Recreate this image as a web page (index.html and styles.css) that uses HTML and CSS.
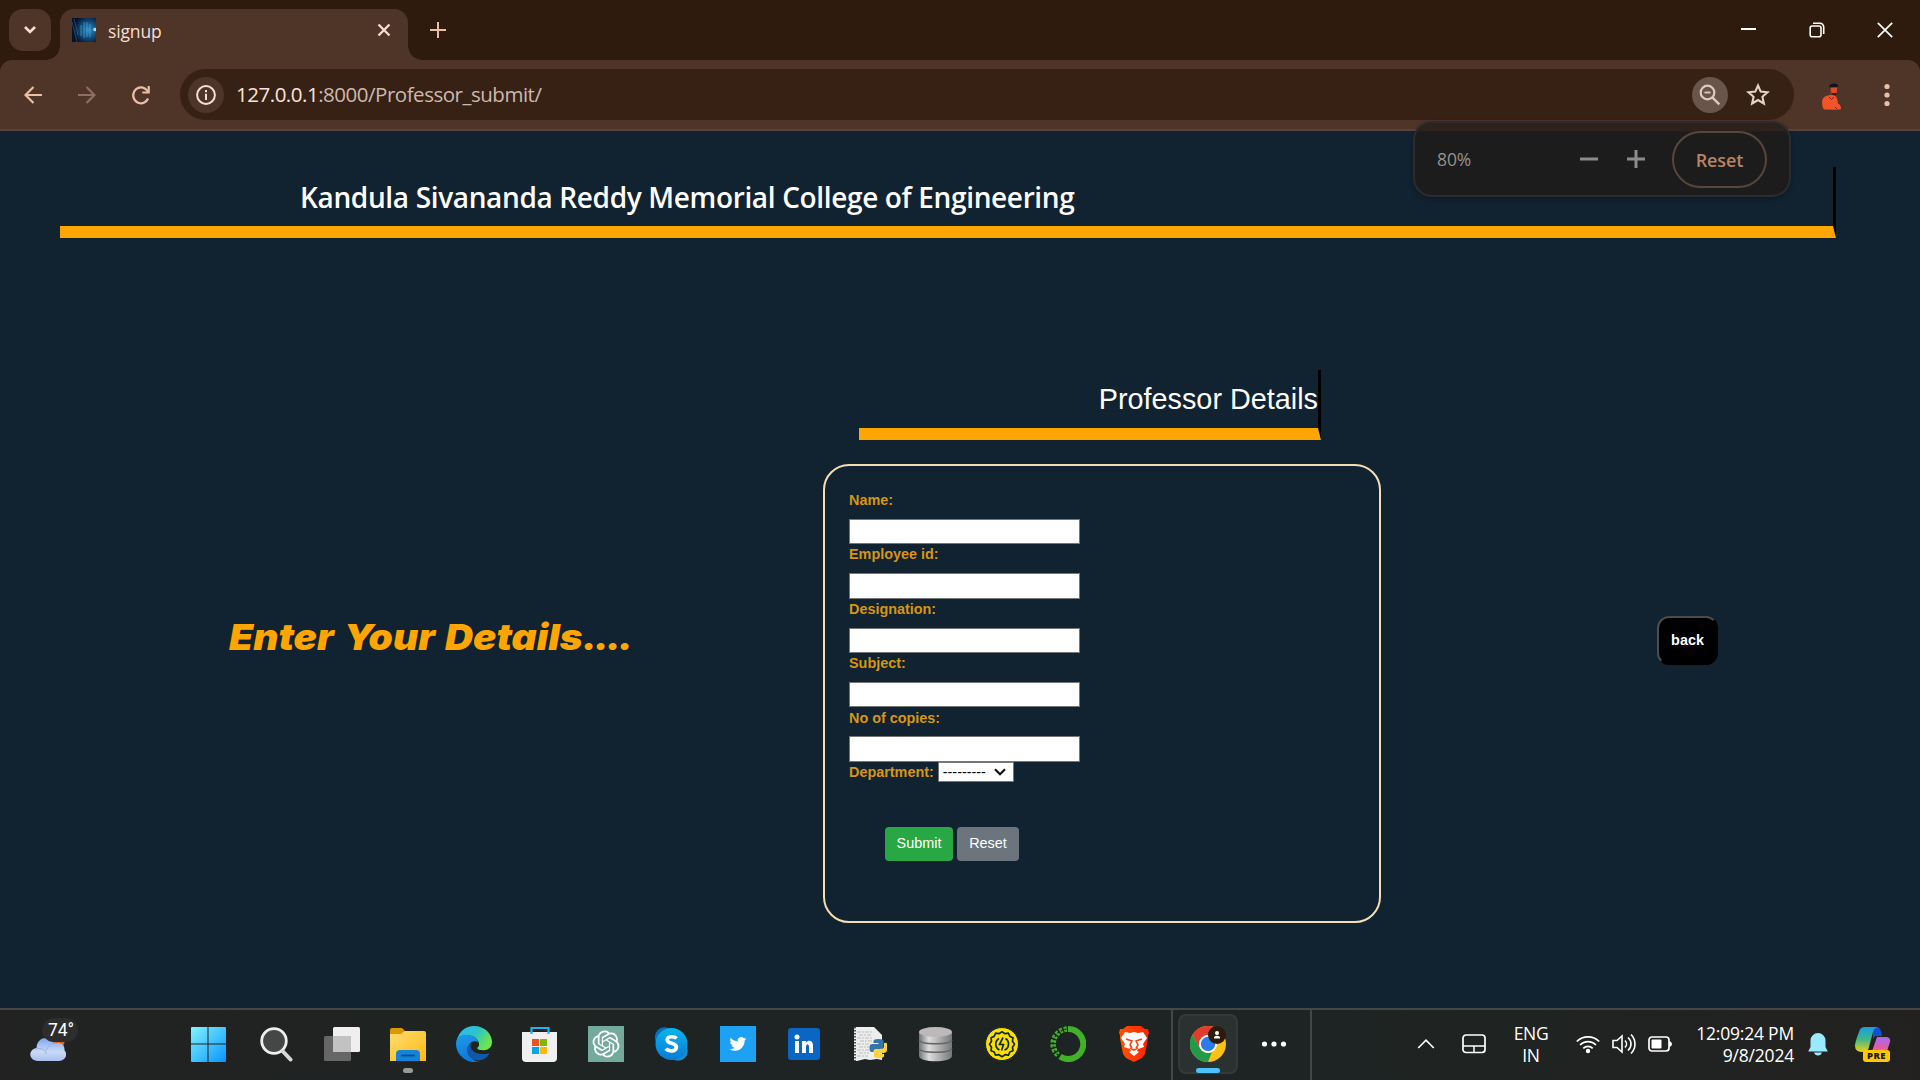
FILE: index.html
```html
<!DOCTYPE html>
<html lang="en">
<head>
<meta charset="utf-8">
<title>signup</title>
<link rel="stylesheet" href="styles.css">
</head>
<body>
<div class="tabstrip">
  <div class="tab-search"><svg width="14" height="10" viewBox="0 0 14 10"><path d="M2 2l5 5 5-5" fill="none" stroke="#f4dfd3" stroke-width="2.6"/></svg></div>
  <div class="tab">
    <svg class="favicon" width="24" height="24" viewBox="0 0 24 24">
      <defs><radialGradient id="fav" cx=".7" cy=".5" r=".65"><stop offset="0" stop-color="#2f8fc4"/><stop offset=".5" stop-color="#10507f"/><stop offset="1" stop-color="#04122b"/></radialGradient></defs>
      <rect width="24" height="24" fill="url(#fav)"/><path d="M0 4l5 20M2 1l4 16" stroke="#86a7c0" stroke-width=".8" opacity=".4"/><path d="M9 7v11M12 4v16M15 4v15M18 6v13" stroke="#58aedb" stroke-width="1" opacity=".6"/><circle cx="23" cy="11.500" r="1.800" fill="#9be4ff"/>
    </svg>
    <span class="tab-title">signup</span>
    <svg width="14" height="14" viewBox="0 0 14 14"><path d="M1.500 1.500l11 11M12.500 1.500l-11 11" stroke="#f4dfd3" stroke-width="2.300"/></svg>
  </div>
  <svg class="new-tab" width="16" height="16" viewBox="0 0 16 16"><path d="M8 0v16M0 8h16" stroke="#eabfa8" stroke-width="2"/></svg>
  <div class="window-controls">
    <svg width="16" height="16" viewBox="0 0 16 16"><path d="M0 7h15" stroke="#fff" stroke-width="2"/></svg>
    <svg width="16" height="16" viewBox="0 0 16 16"><rect x="1.200" y="4" width="10.800" height="10.800" rx="2" fill="none" stroke="#fff" stroke-width="1.600"/><path d="M4 1.300h7a3.700 3.700 0 013.700 3.700v7" fill="none" stroke="#fff" stroke-width="1.600"/></svg>
    <svg width="16" height="16" viewBox="0 0 16 16"><path d="M.8.8l14.400 14.400M15.200.8L.8 15.200" stroke="#fff" stroke-width="1.700"/></svg>
  </div>
</div>
<div class="toolbar-back"><div class="toolbar">
  <svg class="nav" width="18" height="18" viewBox="0 0 18 18"><path d="M18 9H2M9.500 1L1.500 9l8 8" fill="none" stroke="#eabfa8" stroke-width="2.200"/></svg>
  <svg class="nav" width="18" height="18" viewBox="0 0 18 18"><path d="M0 9h16M8.500 1l8 8-8 8" fill="none" stroke="#8f6f60" stroke-width="2.200"/></svg>
  <svg class="nav" width="18" height="20" viewBox="0 0 18 20"><path d="M16 13.500A7.700 8 0 119 2.300c3 0 5 1.300 7 4.200" fill="none" stroke="#eabfa8" stroke-width="2.300"/><path d="M17.800 1v7.500h-7.500V6.400h5.300V1z" fill="#eabfa8"/></svg>
  <div class="omnibox">
    <span class="site-info"><svg width="20" height="20" viewBox="0 0 20 20"><circle cx="10" cy="10" r="8.900" fill="none" stroke="#f4dfd3" stroke-width="2"/><path d="M10 8.800V15M10 5v2.200" stroke="#f4dfd3" stroke-width="2"/></svg></span>
    <span class="url"><b>127.0.0.1</b>:8000/Professor_submit/</span>
    <span class="zoom-badge"><svg width="22" height="22" viewBox="0 0 22 22"><circle cx="8.500" cy="8.500" r="6.800" fill="none" stroke="#dccac0" stroke-width="2.200"/><path d="M5.500 8.500h6" stroke="#dccac0" stroke-width="1.900"/><path d="M13.300 13.300l7 7" stroke="#dccac0" stroke-width="2.400"/></svg></span>
    <svg class="star" width="24" height="23" viewBox="0 0 24 23"><path d="M12 2.500l2.700 6.100 6.800.7-5.100 4.500 1.500 6.700L12 17l-5.900 3.500 1.500-6.700-5.100-4.500 6.800-.7z" fill="none" stroke="#e5d2c8" stroke-width="2.100"/></svg>
  </div>
  <svg class="avatar" width="20" height="27" viewBox="0 0 20 27"><path d="M2 26.500C0 24 0 20 .2 17.500 1 14 4 13 7.500 12l5 .3c2.500 2 3 4 3.500 8.200 2.500 1 3 3 3 5.500l-3 .7z" fill="#f2542a"/><path d="M8.800 4h6.400l-.5 6-2.700 2.500-3.500-2z" fill="#dc4b2c"/><path d="M7 3.500C8 .3 14-.6 16 2.200l-.2 2L8.200 4.500z" fill="#151320"/><path d="M9 8l1 2 2 .3 2.700-.3-.5 1.500-2 1-2.500-1.500z" fill="#341318"/><path d="M7 14l2.500 2.500 2.500-2.500M13 24l2.500 2.500" fill="none" stroke="#8c1c20"/></svg>
  <svg width="6" height="24" viewBox="0 0 6 24"><g fill="#eabfa8"><circle cx="3" cy="3.500" r="2.600"/><circle cx="3" cy="12" r="2.600"/><circle cx="3" cy="20.500" r="2.600"/></g></svg>
</div></div>
<div class="zoom-bubble">
  <span class="zoom-value">80%</span>
  <svg width="18" height="18" viewBox="0 0 18 18"><path d="M0 9h18" stroke="#8e8b89" stroke-width="3"/></svg>
  <svg width="18" height="18" viewBox="0 0 18 18"><path d="M0 9h18M9 0v18" stroke="#8e8b89" stroke-width="3"/></svg>
  <span class="zoom-reset">Reset</span>
</div>

<main class="page">
  <h1 class="college">Kandula Sivananda Reddy Memorial College of Engineering</h1>
  <div class="columns">
    <p class="prompt">Enter Your Details<span class="dots">....</span></p>
    <section class="form-column">
      <h2 class="form-title">Professor Details</h2>
      <form class="card">
        <label for="n">Name:</label><input id="n">
        <label for="e">Employee id:</label><input id="e">
        <label for="d">Designation:</label><input id="d">
        <label for="s">Subject:</label><input id="s">
        <label for="c">No of copies:</label><input id="c">
        <div class="department"><span>Department:</span><span class="select">---------<svg width="12" height="8" viewBox="0 0 12 8"><path d="M1 1.200l5 5 5-5" fill="none" stroke="#111" stroke-width="2.200"/></svg></span></div>
        <div class="actions"><button type="button" class="submit">Submit</button><button type="button" class="reset">Reset</button></div>
      </form>
    </section>
    <button class="back">back</button>
  </div>
</main>

<footer class="taskbar">
  <div class="weather">
    <svg width="36" height="26" viewBox="0 0 36 26"><defs><linearGradient id="cl" x2="0" y2="1"><stop offset="0" stop-color="#7fa6ee"/><stop offset=".6" stop-color="#c9daf8"/><stop offset="1" stop-color="#a9c0ee"/></linearGradient></defs><circle cx="29" cy="6" r="5.500" fill="#e8641b"/><path d="M8 25C-2 24.500-2 13.500 6.500 12 7-.5 22-.5 24 8c7-3 11 1 10.500 6.500C38 18 36 24.500 29 25z" fill="url(#cl)"/><path d="M5 13c7-2 11 2 11 5M16 15c2-5 5-8 10-8" fill="none" stroke="#94b1ec" stroke-width="1"/></svg>
    <span class="temp">74°</span>
  </div>
  <div class="apps">
    <span><svg width="36" height="36" viewBox="0 0 36 36"><defs><linearGradient id="win" x2="1" y2="1"><stop offset="0" stop-color="#82f3ff"/><stop offset="1" stop-color="#0795ff"/></linearGradient></defs><path d="M2 1h15.500v16.500H1V2a1 1 0 011-1zM18.500 1H35a1 1 0 011 1v15.500H18.500zM1 18.500h16.500V36H2a1 1 0 01-1-1zM18.500 18.500H36V35a1 1 0 01-1 1H18.500z" fill="url(#win)"/></svg></span>
    <span><svg width="36" height="36" viewBox="0 0 36 36"><circle cx="16" cy="15" r="12.300" fill="#454747" stroke="#eee" stroke-width="2.800"/><path d="M25 25.500l7.500 8" stroke="#d5d8db" stroke-width="4" stroke-linecap="round"/></svg></span>
    <span><svg width="36" height="36" viewBox="0 0 36 36"><rect y="10" width="27" height="25" rx="1.500" fill="#666"/><rect x="9" y="1" width="27" height="25" rx="1.500" fill="#efefef"/><path d="M9 10h18v16H9z" fill="#c2c2c2"/></svg></span>
    <span class="running"><svg width="36" height="36" viewBox="0 0 36 36"><defs><linearGradient id="fo" x2="1" y2="1"><stop offset="0" stop-color="#ffdc70"/><stop offset="1" stop-color="#fdbb12"/></linearGradient></defs><path d="M0 4q0-2 2-2h10l4 4v3H0z" fill="#dc9800"/><path d="M0 8h11l4-3h19q2 0 2 2v28H0z" fill="url(#fo)"/><path d="M6 35v-7q0-4 4-4h16q4 0 4 4v7z" fill="#1683d8"/><path d="M11 29.500h14" stroke="#074f94" stroke-width="1.800"/></svg></span>
    <span><svg width="36" height="36" viewBox="0 0 36 36"><defs><linearGradient id="e1" x2="1" y2=".5"><stop offset="0" stop-color="#35b9f4"/><stop offset=".55" stop-color="#2bc3c9"/><stop offset="1" stop-color="#6fe44b"/></linearGradient><linearGradient id="e2" x2=".3" y2="1"><stop offset="0" stop-color="#1c9be8"/><stop offset="1" stop-color="#0f78d8"/></linearGradient></defs><path d="M.5 15C3 5 10 0 18 0c11 0 18 8 18 16 0 6-5 9-10 8-5 0-6-2-3-4 1-6-6-12-13-10C5 11 2 13 .5 15z" fill="url(#e1)"/><path d="M0 18C0 10 7 8 11 9c6 0 11 4 11 7-8-4-14 7-6 16 2 3 5 4 8 3.500C10 39 0 28 0 18z" fill="url(#e2)"/><path d="M14.500 17c-9 7 0 22 14 16 2-1.500 4-3.500 5-6-6 2-20 2-19-10z" fill="#1058a8"/></svg></span>
    <span><svg width="36" height="36" viewBox="0 0 36 36"><path d="M0 6h35v26q0 4-4 4H4q-4 0-4-4z" fill="#f0f0f0"/><path d="M9.500 8V2h17v6" fill="none" stroke="#27b0ee" stroke-width="2.200"/><path d="M10 13h7v7h-7z" fill="#f25022"/><path d="M18 13h7v7h-7z" fill="#7fba00"/><path d="M10 21h7v7h-7z" fill="#00a4ef"/><path d="M18 21h7v7h-7z" fill="#ffb900"/></svg></span>
    <span><svg width="36" height="36" viewBox="0 0 36 36"><path fill="#74aa9c" d="M0 0h36v36H0z"/><g transform="translate(4.500 4.500) scale(1.125)"><path fill="#fff" d="M22.282 9.821a5.985 5.985 0 0 0-.516-4.910 6.046 6.046 0 0 0-6.510-2.900A6.065 6.065 0 0 0 4.981 4.182a5.985 5.985 0 0 0-3.998 2.900 6.046 6.046 0 0 0 .743 7.097 5.980 5.980 0 0 0 .510 4.911 6.051 6.051 0 0 0 6.515 2.900A5.985 5.985 0 0 0 13.260 24a6.056 6.056 0 0 0 5.772-4.206 5.990 5.990 0 0 0 3.998-2.900 6.056 6.056 0 0 0-.747-7.073zM13.260 22.430a4.476 4.476 0 0 1-2.876-1.040l.141-.081 4.779-2.758a.795.795 0 0 0 .392-.681v-6.737l2.020 1.169a.071.071 0 0 1 .038.052v5.583a4.504 4.504 0 0 1-4.494 4.493zM3.600 18.304a4.470 4.470 0 0 1-.535-3.014l.142.085 4.783 2.758a.771.771 0 0 0 .780 0l5.843-3.368v2.332a.080.080 0 0 1-.033.062L9.740 19.950a4.500 4.500 0 0 1-6.140-1.646zM2.340 7.896a4.485 4.485 0 0 1 2.366-1.973V11.600a.766.766 0 0 0 .388.677l5.815 3.354-2.020 1.169a.076.076 0 0 1-.071 0l-4.830-2.787A4.504 4.504 0 0 1 2.340 7.872zm16.597 3.855l-5.833-3.387L15.119 7.200a.076.076 0 0 1 .071 0l4.830 2.791a4.494 4.494 0 0 1-.676 8.105v-5.678a.790.790 0 0 0-.407-.667zm2.010-3.023l-.141-.085-4.774-2.782a.776.776 0 0 0-.785 0L9.409 9.230V6.897a.066.066 0 0 1 .028-.061l4.830-2.787a4.500 4.500 0 0 1 6.680 4.660zm-12.640 4.135l-2.020-1.164a.080.080 0 0 1-.038-.057V6.074a4.500 4.500 0 0 1 7.376-3.453l-.142.080L8.704 5.460a.795.795 0 0 0-.393.681zm1.097-2.365l2.602-1.500 2.607 1.500v2.999l-2.597 1.500-2.607-1.500z"/></g></svg></span>
    <span><svg width="36" height="36" viewBox="0 0 36 36"><defs><linearGradient id="sk" x2="0" y2="1"><stop offset="0" stop-color="#0ab5ee"/><stop offset="1" stop-color="#087bd5"/></linearGradient></defs><circle cx="10.500" cy="11" r="9.700" fill="#0a72b9"/><circle cx="24" cy="25" r="9.800" fill="#168dce"/><circle cx="17.500" cy="18" r="16" fill="url(#sk)"/><path d="M22.500 12.500c-2-2.300-9-2.800-9.300 1.200 0 4.700 9 2.500 9.200 7.300 0 5-8 4.600-10.600 1.800" fill="none" stroke="#fff" stroke-width="3.700"/></svg></span>
    <span><svg width="36" height="36" viewBox="0 0 36 36"><path fill="#1da1f2" d="M0 0h36v36H0z"/><path fill="#fff" transform="translate(9.500 9.500) scale(.7)" d="M23.950 4.600a10 10 0 01-2.800.8 5 5 0 002.200-2.700 10 10 0 01-3.100 1.200 4.900 4.900 0 00-8.400 4.500A14 14 0 011.700 3.200a4.900 4.900 0 001.500 6.500 4.900 4.900 0 01-2.200-.6 4.900 4.900 0 004 4.900 5 5 0 01-2.200.1 4.900 4.900 0 004.600 3.400A9.900 9.900 0 010 19.500 14 14 0 007.600 21.700c9 0 14-7.500 14-14v-.6a10 10 0 002.350-2.500z"/></svg></span>
    <span><svg width="36" height="36" viewBox="0 0 36 36"><rect x="2" y="2" width="32" height="32" rx="3" fill="#0a66c2"/><circle cx="11" cy="11" r="2.500" fill="#fff"/><path d="M9 15h4v12H9zM16 15h4v1.700c2.200-3 7-2.500 7 2.800V27h-4v-6c0-4-3-3.500-3 0v6h-4z" fill="#fff"/></svg></span>
    <span><svg width="36" height="36" viewBox="0 0 36 36"><path d="M2 1h20l8 8v25l-5-1-7 1-5-1-8 2H2z" fill="#eee"/><path d="M5 6h15M7 9h13M5 12h16M8 15h12M5 18h12M7 21h10M5 24h14M7 27h10M5 30h11" stroke="#bcbcbc" stroke-dasharray="4 1 2 1"/><path d="M3 1v34" stroke="#222" stroke-width="1.500" stroke-dasharray="1.500 1.500"/><path d="M18 24v-3q0-3 3-3h6v-1h-5v-2q0-2 5-2t5 2v5q0 3-3 3h-4q-3 0-3 3h-2q-2 0-2-4z" fill="#3775a9" transform="translate(-.5 0)"/><path d="M35 18v6q0 3-4 3h-4v1h5v2q0 2-5 2t-5-2v-4q0-3 3-3h4q3 0 3-3v-3q3-1 3 1z" fill="#ffd43b"/></svg></span>
    <span><svg width="36" height="36" viewBox="0 0 36 36"><defs><linearGradient id="db"><stop offset="0" stop-color="#747474"/><stop offset=".3" stop-color="#ddd"/><stop offset="1" stop-color="#777"/></linearGradient></defs><path d="M1 6h33v24c0 7-33 7-33 0z" fill="url(#db)"/><ellipse cx="17.500" cy="6" rx="16.500" ry="5" fill="#bdb9ba"/><path d="M1 14c2 5 31 5 33 0M1 22.500c2 5 31 5 33 0" fill="none" stroke="#666" stroke-width="1.500"/></svg></span>
    <span><svg width="36" height="36" viewBox="0 0 36 36"><circle cx="18" cy="18" r="16.500" fill="#fddf00" stroke="#102b38" stroke-width="1"/><path d="M18 6.500l3 2 3.500-.5 1.300 3.200 3.200 1.300-.5 3.500 2 3-2 3 .5 3.500-3.200 1.300-1.300 3.200-3.500-.5-3 2-3-2-3.500.5-1.300-3.200L7 25.500l.5-3.500-2-3 2-3-.5-3.500 3.200-1.300L11.500 8l3.500.5z" fill="none" stroke="#102b38" stroke-width="1.700" stroke-linejoin="round" transform="translate(0 -.8)"/><path d="M15 12.500a6.500 6.500 0 00.5 11.500M20.500 24a6.500 6.500 0 001-11.500M19 11.500l-3.500 7h4l-2 6" fill="none" stroke="#102b38" stroke-width="1.700"/></svg></span>
    <span><svg width="36" height="36" viewBox="0 0 36 36"><path d="M18 3A15 15 0 1110 30.500" fill="none" stroke="#43b02a" stroke-width="6"/><path d="M8 29A15 15 0 0117 3" fill="none" stroke="#43b02a" stroke-width="5.500" stroke-dasharray="3 1.500"/><path d="M8 29A15 15 0 0117 3" fill="none" stroke="#1f2422" stroke-width="1.300" stroke-dasharray="2 2"/></svg></span>
    <span><svg width="36" height="36" viewBox="0 0 36 36"><defs><linearGradient id="br"><stop offset="0" stop-color="#ff5500"/><stop offset="1" stop-color="#ff2000"/></linearGradient></defs><path d="M11 0h14l4 3 3 0 1 4-1 2 0 3-3 16-3 4-8 4-8-4-3-4-3-16V9L3 7l1-4h3z" fill="url(#br)"/><path d="M9 6l5 1 4-1 4 1 5-1 4 6-4 6 1 3-6 2-1 2 2 1-5 4-5-4 2-1-1-2-6-2 1-3-4-6z" fill="#fff"/><path d="M10 13l6 2-2 4 2 3M26 13l-6 2 2 4-2 3M14 22l4 2 4-2" fill="none" stroke="#ff4010" stroke-width="1.600"/></svg></span>
  </div>
  <div class="active-group">
    <div class="chrome-tile">
      <svg width="36" height="36" viewBox="0 0 36 36"><circle cx="18" cy="18" r="18" fill="#fbc116"/><path d="M2.400 9A18 18 0 0133.600 9H18a9 9 0 00-7.800 13.500z" fill="#e33b2e"/><path d="M2.400 9l7.800 13.500A9 9 0 0022 26l-4 10A18 18 0 012.400 9z" fill="#229a4a"/><circle cx="18" cy="18" r="9" fill="#fff"/><circle cx="18" cy="18" r="7.200" fill="#2b7bea"/><circle cx="27" cy="9" r="9" fill="#2e1b0e"/><circle cx="27" cy="7" r="2" fill="#fff"/><path d="M24 12.500v-1.500q3-2.500 6 0v1.500z" fill="#fff"/></svg>
    </div>
    <svg class="more" width="26" height="6" viewBox="0 0 26 6"><g fill="#fff"><circle cx="3.500" cy="3" r="2.600"/><circle cx="13" cy="3" r="2.600"/><circle cx="22.500" cy="3" r="2.600"/></g></svg>
  </div>
  <div class="tray">
    <svg class="t-chev" width="18" height="12" viewBox="0 0 18 12"><path d="M1.200 10L9 2.200l7.800 7.800" fill="none" stroke="#fff" stroke-width="1.700"/></svg>
    <svg class="t-pad" width="24" height="20" viewBox="0 0 24 20"><rect x="1" y="1" width="22" height="17.500" rx="3" fill="none" stroke="#fff" stroke-width="1.700"/><path d="M1 12h22M12 12v6.500" stroke="#fff" stroke-width="1.500"/></svg>
    <div class="lang"><span>ENG</span><span>IN</span></div>
    <svg class="t-wifi" width="24" height="20" viewBox="0 0 24 20"><g fill="none" stroke="#fff" stroke-width="1.700"><path d="M.8 7.500a15.800 15.800 0 0122.400 0M4 11a11.300 11.300 0 0116 0M7.300 14.400a6.600 6.600 0 019.400 0"/></g><circle cx="12" cy="17" r="2.200" fill="#fff"/></svg>
    <svg class="t-vol" width="24" height="22" viewBox="0 0 24 22"><g fill="none" stroke="#fff" stroke-width="1.600"><path d="M1 7.500h4L10 3v16l-5-4.500H1z"/><path d="M13 7.500c2 2 2 5 0 7M16 4.500c4 3.700 4 9.300 0 13M19 1.500c5.300 5.300 5.300 13.700 0 19"/></g></svg>
    <svg class="t-bat" width="24" height="16" viewBox="0 0 24 16"><rect x="1" y="1" width="20" height="14" rx="3" fill="none" stroke="#fff" stroke-width="1.700"/><rect x="3.500" y="3.500" width="10" height="9" rx="1" fill="#fff"/><path d="M21 5.500h1.500q1.500 1 1.500 2.500t-1.500 2.500H21z" fill="#fff"/></svg>
    <div class="clock"><span>12:09:24 PM</span><span>9/8/2024</span></div>
    <svg class="t-bell" width="20" height="24" viewBox="0 0 20 24"><path d="M2.500 8.500a7.500 7.500 0 0115 0v6.500l2.300 4.500H.2L2.500 15zM6 20.500h8q-1 3-4 3t-4-3z" fill="#9aeaff"/></svg>
    <div class="copilot"><svg width="36" height="28" viewBox="0 0 36 28"><defs><linearGradient id="c1" x2="0" y2="1"><stop offset="0" stop-color="#159de6"/><stop offset=".5" stop-color="#41b886"/><stop offset="1" stop-color="#f0cf19"/></linearGradient><linearGradient id="c2" x2="0" y2="1"><stop offset="0" stop-color="#a46af6"/><stop offset=".6" stop-color="#e15ba8"/><stop offset="1" stop-color="#fa7c55"/></linearGradient></defs><path d="M18 0h4q4 0 5 9h-6q-2 0-3 4z" fill="#164ed5"/><path d="M4 5Q5 0 10 0h13q-4 1-5 5l-4 15q-1 5-6 5-8 0-8-6 0-4 4-14z" fill="url(#c1)"/><path d="M22 10h10q4 1 3 5l-3 9q-1 3-5 3H16z" fill="url(#c2)"/></svg><b>PRE</b></div>
  </div>
</footer>
</body>
</html>
```
FILE: styles.css
```css
* { box-sizing: border-box; }
body { margin: 0; width: 1920px; height: 1080px; overflow: hidden; display: flex; flex-direction: column; position: relative; background: #112231; font-family: "Liberation Sans", Arial, sans-serif; }
svg { display: block; flex: none; }
span, p, h1, h2, button, label { white-space: nowrap; }

.tabstrip { height: 60px; flex: none; background: #2e1b0e; display: flex; align-items: flex-start; padding: 9px 27px 0 9px; }
.tab-search { width: 42px; height: 42px; border-radius: 14px; background: #4f3428; display: flex; align-items: center; justify-content: center; }
.tab { position: relative; width: 348px; height: 51px; margin-left: 9px; padding: 0 17px 18px 12px; border-radius: 14px 14px 0 0; background: #4f3428; display: flex; align-items: center; color: #f4dfd3; }
.tab::before, .tab::after { content: ""; position: absolute; bottom: 0; width: 14px; height: 14px; }
.tab::before { left: -14px; background: radial-gradient(circle at 0 0, transparent 13.5px, #4f3428 14px); }
.tab::after { right: -14px; background: radial-gradient(circle at 100% 0, transparent 13.5px, #4f3428 14px); }
.favicon { margin-top: 9px; }
.tab-title { margin: 11px auto 0 12px; font: 17.5px "Open Sans", sans-serif; letter-spacing: -.15px; }
.tab > svg:last-child { margin-top: 9px; }
.new-tab { margin: 13px 0 0 22px; }
.window-controls { margin: 13px 0 0 auto; display: flex; gap: 52px; }

.toolbar-back { flex: none; background: #2e1b0e; }
.toolbar { height: 71px; border-radius: 12px 12px 0 0; background: #4f3428; border-bottom: 2px solid #57453b; display: flex; align-items: center; padding: 0 30px 0 24px; }
.nav { margin-right: 36px; }
.nav + .nav + .nav { margin-right: 30px; }
.omnibox { width: 1614px; height: 51px; border-radius: 26px; background: #372114; display: flex; align-items: center; padding: 0 24px 0 8px; }
.site-info, .zoom-badge { width: 36px; height: 36px; border-radius: 50%; background: #4f3428; display: flex; align-items: center; justify-content: center; }
.url { margin: -1px auto 0 12px; color: #cdb9ad; font: 20.5px "Open Sans", sans-serif; letter-spacing: -.48px; }
.url b { font-weight: 400; color: #f8e4d9; }
.zoom-badge { background: #69554a; margin-right: 18px; }
.avatar { margin: 4px 0 0 28px; }
.avatar + svg { margin-left: auto; }

.zoom-bubble { position: absolute; left: 1413px; top: 121px; width: 378px; height: 76px; border: 2px solid #2b2c2e; border-radius: 19px; background: linear-gradient(#2c211b 8px, #1c1c1c 9px); box-shadow: 0 2px 5px rgba(0, 0, 0, .25); display: flex; align-items: center; padding: 0 22px; z-index: 2; }
.zoom-value { width: 143px; color: #94918f; font: 17.5px "Open Sans", sans-serif; letter-spacing: -.1px; margin-top: -1px; }
.zoom-bubble svg + svg { margin-left: 29px; }
.zoom-reset { width: 95px; height: 57px; margin-left: 27px; border: 2px solid #58453c; border-radius: 29px; color: #b98366; display: flex; align-items: center; justify-content: center; padding-top: 1px; font: 600 18px "Open Sans", sans-serif; letter-spacing: -.1px; }

.page { height: 877px; flex: none; padding-top: 36px; color: #fff; }
.college, .form-title { margin: 0; border-right: 3px solid #000; border-bottom: 12px solid #ffa500; }
.college { width: 1776px; height: 71px; margin-left: 60px; padding-left: 240px; font: 600 28px/60px "Open Sans", sans-serif; letter-spacing: -.35px; }
.columns { display: flex; align-items: flex-start; }
.prompt { width: 823px; margin: 0; padding: 376px 0 0 229px; color: #ffa500; font: italic 900 36px/46px Inter, sans-serif; word-spacing: 2px; transform: scaleX(1.08); transform-origin: 229px 0; }
.dots { letter-spacing: -2.3px; }
.form-column { width: 558px; padding-top: 132px; }
.form-title { width: 462px; height: 70px; margin-left: 36px; text-align: right; font-weight: 400; font-size: 28.800px; line-height: 58px; }
.card { height: 459px; margin-top: 24px; border: 2px solid #f5deb3; border-radius: 26px; padding: 22px 24px; display: flex; flex-direction: column; align-items: flex-start; color: #d6960f; font-weight: 700; font-size: 14.400px; }
.card label { height: 30.900px; line-height: 24px; }
.card input { width: 231px; height: 25.400px; margin: 0 0 -1.900px; border: 1px solid #767676; padding: 0; background: #fff; }
.department { display: flex; height: 20px; margin-top: 2px; line-height: 20px; }
.select { width: 76px; height: 20px; margin-left: 4px; padding: 0 7px 0 4px; border: 1px solid #767676; background: #fff; color: #000; font-weight: 400; font-size: 14.400px; display: flex; align-items: center; justify-content: space-between; }
.actions { display: flex; gap: 4px; margin: 45px 0 0 36px; }
.actions button { height: 34px; padding: 0 0 2px; border: 0; border-radius: 4px; color: #fff; font: 14.400px "Liberation Sans", Arial, sans-serif; }
.submit { width: 68px; background: #28a745; }
.reset { width: 62px; background: #6c757d; }
.back { width: 61px; height: 49px; margin: 378px 0 0 276px; padding: 0 0 1px; border: 2px solid #000; border-top-color: #4c4c4c; border-left-color: #4c4c4c; border-radius: 12px; background: #000; color: #fff; font: 700 14.400px "Liberation Sans", Arial, sans-serif; }

.taskbar { height: 72px; flex: none; border-top: 2px solid #454746; background: linear-gradient(90deg, #222, #1e2423 35%, #1e2423 70%, #222120); color: #fff; display: flex; }
.weather { position: relative; width: 175px; padding: 26px 0 0 30px; }
.temp { position: absolute; left: 42px; top: 8px; width: 36px; height: 24px; border-radius: 12px; background: #2d2d2d; font: 17.5px/25px Roboto, sans-serif; text-align: center; padding-left: 2px; }
.apps { display: flex; width: 996px; }
.apps > span { width: 66px; flex: none; display: flex; justify-content: center; padding-top: 16px; position: relative; }
.apps > span:nth-child(2) { margin-left: 2px; }
.running::after, .chrome-tile::after { content: ""; position: absolute; top: 58px; left: 28px; width: 10px; height: 5px; border-radius: 3px; background: #999; }
.active-group { width: 141px; border: solid #454746; border-width: 0 2px; display: flex; align-items: center; padding: 0 0 2px 5px; }
.chrome-tile { position: relative; width: 60px; height: 60px; border: 2px solid #353a39; border-radius: 8px; background: #2b3130; display: flex; align-items: center; justify-content: center; }
.chrome-tile::after { top: 52px; left: 16px; width: 24px; background: #4cc2ff; }
.more { margin-left: 23px; }
.tray { width: 608px; display: flex; align-items: center; padding: 0 0 3px 105px; }
.t-pad { margin-left: 27px; }
.lang, .clock { display: flex; flex-direction: column; font: 17.500px/22px "Open Sans", sans-serif; margin-top: 1px; }
.lang { width: 40px; margin-left: 25px; align-items: center; letter-spacing: -.3px; }
.t-wifi { margin-left: 25px; }
.t-vol { margin-left: 12px; }
.t-bat { margin-left: 12px; }
.clock { width: 122px; align-items: flex-end; letter-spacing: -.2px; }
.t-bell { margin-left: 14px; }
.copilot { position: relative; margin-left: 27px; width: 36px; height: 34px; }
.copilot b { position: absolute; left: 8px; top: 23px; width: 27px; height: 12px; border-radius: 3px; background: #ffc70a; color: #1d1a10; font: 800 9.500px/12px "Open Sans", sans-serif; letter-spacing: .4px; text-align: center; }
```
